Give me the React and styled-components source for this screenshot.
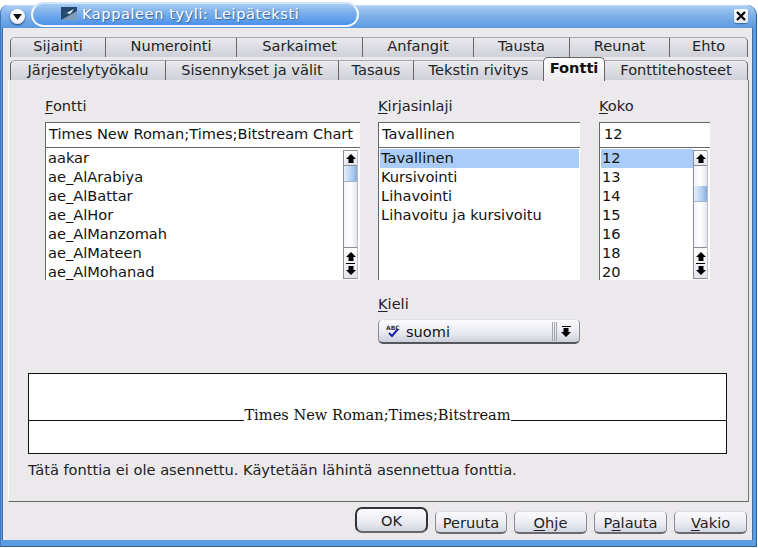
import React from "react";
import styled, { createGlobalStyle } from "styled-components";

const Global = createGlobalStyle`
  html, body { margin: 0; padding: 0; background: #fff; }
  #root { width: 758px; height: 548px; overflow: hidden; }
  * { box-sizing: border-box; }
`;

const Win = styled.div`
  width: 758px; height: 548px; display: flex; flex-direction: column; padding: 5px 1px 1px 0;
  font-family: "DejaVu Sans", sans-serif; font-size: 14.6px; color: #111;
  background: #fff; overflow: hidden;
`;
const Shell = styled.div`
  flex: 1; min-height: 0; display: flex; flex-direction: column; background: #5d9ce2;
  border-radius: 8px 10px 0 0; border-left: 1px solid #3f78bd; border-right: 1px solid #2f6096;
  border-bottom: 1px solid #2f6096;
`;
const TitleBar = styled.div`
  height: 23px; flex: none; display: flex; align-items: flex-start; padding: 0 8px;
  background: linear-gradient(#c4dcf6 0, #a4caf1 2px, #7fb2ea 10px, #5b9ae0 23px);
  border-radius: 8px 10px 0 0;
`;
const MenuBtn = styled.div`
  width: 15px; height: 15px; border-radius: 50%; flex: none; margin: 4px 0 0 1px;
  background: radial-gradient(circle at 50% 35%, #fff 40%, #d6d6dc);
  display: flex; align-items: center; justify-content: center; box-shadow: 0 1px 2px #1c3f6c;
`;
const Pill = styled.div`
  width: 328px; height: 25px; margin: -3px 0 0 6px; flex: none; border-radius: 13px;
  border: 2px solid #f2f8fe; border-top-color: #d4e5f8;
  background: linear-gradient(#a6cbf2, #7db1ec 40%, #4b91e8);
  display: flex; align-items: center; padding: 0 0 2px 28px; gap: 5px;
`;
const TitleText = styled.span`
  color: #fff; font-size: 14.6px; letter-spacing: .55px; text-shadow: 1px 1px 1px #34659e; white-space: nowrap;
`;
const CloseBtn = styled.div`
  margin: 4px 0 0 auto; width: 14px; height: 14px; flex: none; border-radius: 2px;
  background: linear-gradient(#fff, #e4e4ea); display: flex; align-items: center; justify-content: center;
  box-shadow: 0 1px 1px #3a6ca8;
`;
const Frame = styled.div`
  flex: 1; margin: 0 3px 6px 1px; background: #ece9ec; border-left: 1px solid #3f6ea8;
  border-right: 1px solid #3f6ea8; padding: 9px 5px 0 5px; display: flex; flex-direction: column;
`;
const TabRow = styled.div`
  display: flex; height: ${p => p.$h}px; flex: none; margin: ${p => p.$m};
`;
const Tab = styled.div`
  width: ${p => p.$w}px; flex: none; display: flex; align-items: center; justify-content: center;
  font-size: 14.6px; white-space: nowrap; color: #222; padding-bottom: ${p => p.$pb ?? 4}px;
  background: linear-gradient(#e9e9ef, #cfd0d8);
  border-top: 1px solid #a8a8b0; border-left: 1px solid #666;
  &:first-child { border-top-left-radius: 5px; }
  &:last-child { border-top-right-radius: 5px; border-right: 1px solid #666; }
`;
const ActiveTab = styled(Tab)`
  font-weight: 700; color: #111; border: 1px solid #666; border-bottom: none; border-radius: 5px 5px 0 0;
  background: linear-gradient(#fff, #ece9ec); height: 24px; margin-top: -3px; padding-bottom: 4px;
  & + div { border-left: none; }
  &:first-child, &:last-child { border-radius: 5px 5px 0 0; }
`;
const Panel = styled.div`
  width: 741px; height: 422px; flex: none; margin-left: 0; border: 1px solid #c6c6cc; border-left-color: #fff;
  border-right-color: #777; border-top: none; border-bottom: 1px solid #666;
  padding: 16px 20px 0 36px;
`;
const Columns = styled.div`
  display: grid; grid-template-columns: 315px 202px 112px; column-gap: 18px;
`;
const Column = styled.div`
  display: flex; flex-direction: column; min-width: 0;
  &:nth-child(3) { margin-left: 1px; }
`;
const Label = styled.div`
  height: 20px; font-size: 14.6px; line-height: 20px; color: #222;
  u { text-underline-offset: 2px; text-decoration-thickness: 1px; }
`;
const Field = styled.div`
  height: 25px; margin-top: 6px; background: #fff; border-left: 1px solid #666; border-top: 1px solid #666;
  padding-left: ${p => p.$pad ?? 3}px; line-height: 22px; font-size: 14.6px; white-space: nowrap;
`;
const List = styled.div`
  height: 133px; background: #fff; border-left: 1px solid #666; border-top: 1px solid #666;
  display: flex; overflow: hidden; padding: 1px 1px 0 1px;
`;
const Rows = styled.div` flex: 1; min-width: 0; `;
const Row = styled.div`
  height: 19px; line-height: 18px; padding-left: 1px; font-size: 14.6px; white-space: nowrap; color: #111;
  background: ${p => (p.$sel ? "#a9cdf8" : "transparent")};
`;
const Scroll = styled.div`
  width: 15px; flex: none; margin: 1px 1px 1px 0; display: flex; flex-direction: column;
  border-left: 1px solid #8d8d96; border-right: 1px solid #bcbcc4;
  background: linear-gradient(90deg, #f4f4fa, #fff 50%, #e4e4ee);
`;
const ScrollBtn = styled.div`
  height: 16px; flex: none; background: linear-gradient(#fff, #e4e4ec);
  border-top: 1px solid #8d8d96; border-bottom: 1px solid #8d8d96;
  display: flex; align-items: center; justify-content: center;
`;
const Track = styled.div` flex: 1; padding-top: ${p => p.$top}px; `;
const Thumb = styled.div`
  height: 16px; background: linear-gradient(90deg, #e4effb, #a9c9ee 70%, #86a9d6);
  border-bottom: 1px solid #9db4d0;
`;
const ScrollBtn2 = styled(ScrollBtn)` height: 32px; flex-direction: column; gap: 2px; `;
const Bar = styled.div` width: 9px; height: 1px; background: #000; flex: none; `;
const Sub = styled.div` width: 202px; margin-top: 14px; `;
const Combo = styled.div`
  height: 25px; margin-top: 5px; display: flex; align-items: center; padding-left: 7px;
  border-radius: 5px; border: 1px solid #8a8a92; border-top-color: #e0e0e6; border-bottom: 2px solid #55555c;
  background: linear-gradient(#fcfcff, #e8e9f0 60%, #cdd0da); font-size: 14.6px;
  & > svg { margin-right: 5px; }
`;
const Grip = styled.div`
  margin-left: auto; width: 6px; height: 19px; flex: none;
  background: repeating-linear-gradient(90deg, #a4a4ac 0 1px, transparent 1px 2px);
`;
const ComboArrow = styled.div`
  width: 16px; margin-right: 5px; flex: none; display: flex; flex-direction: column; gap: 1px; align-items: center; justify-content: center;
`;
const Preview = styled.div`
  width: 699px; height: 81px; margin: 29px 0 0 -17px; background: #fff; border: 1px solid #111;
  display: flex; align-items: flex-end; padding-bottom: 32px;
  font-family: "DejaVu Serif", serif; font-size: 14.6px; color: #111;
`;
const PreviewLine = styled.div` flex: 1; border-bottom: 1px solid #111; `;
const PreviewText = styled.span` line-height: 14px; margin-bottom: -1px; white-space: nowrap; `;
const Note = styled.div` margin: 7px 0 0 -17px; font-size: 14.6px; line-height: 18px; color: #222; `;
const Footer = styled.div`
  display: flex; justify-content: flex-end; gap: 7px; padding: 9px 0 0 0; align-items: flex-start;
`;
const Button = styled.div`
  height: 23px; width: ${p => p.$w}px; display: flex; align-items: center; justify-content: center;
  font-size: 14.6px; color: #222; border-radius: 5px; border: 1px solid #8a8a92; border-top-color: #dcdce2;
  border-bottom: 2px solid #6a6a72; background: linear-gradient(#fbfbff, #e9eaf1 60%, #d2d5df);
  u { text-underline-offset: 2px; text-decoration-thickness: 1px; }
`;
const DefaultButton = styled(Button)`
  height: 26px; border: 2px solid #333; border-bottom-color: #666; border-radius: 7px; margin-top: -4px;
`;

const Up = () => <svg width="10" height="9" viewBox="0 0 10 9"><path d="M5 0 10 5H7.5V9H2.5V5H0Z" fill="#000" /></svg>;
const Down = () => <svg width="10" height="9" viewBox="0 0 10 9"><path d="M5 9 10 4H7.5V0H2.5V4H0Z" fill="#000" /></svg>;

const ScrollBar = ({ top }) => (
  <Scroll>
    <ScrollBtn><Up /></ScrollBtn>
    <Track $top={top}><Thumb /></Track>
    <ScrollBtn2>
      <Up />
      <Bar />
      <Down />
    </ScrollBtn2>
  </Scroll>
);

const fonts = ["aakar", "ae_AlArabiya", "ae_AlBattar", "ae_AlHor", "ae_AlManzomah", "ae_AlMateen", "ae_AlMohanad"];
const styles = ["Tavallinen", "Kursivointi", "Lihavointi", "Lihavoitu ja kursivoitu"];
const sizes = ["12", "13", "14", "15", "16", "18", "20"];
const row1 = [["Sijainti", 95], ["Numerointi", 131], ["Sarkaimet", 126], ["Anfangit", 111], ["Tausta", 96], ["Reunat", 100], ["Ehto", 79]];

export default function App() {
  return (
    <Win>
      <Global />
      <Shell>
        <TitleBar>
          <MenuBtn><svg width="9" height="6" viewBox="0 0 9 6"><path d="M0 0H9L4.5 6Z" fill="#111" /></svg></MenuBtn>
          <Pill>
            <svg width="16" height="13" viewBox="0 0 16 13">
              <rect width="16" height="13" fill="#234a6e" />
              <path d="M0 13 16 4V13Z" fill="#7f9cb6" />
              <path d="M2 8 13 2 9 7 6 6Z" fill="#fff" />
            </svg>
            <TitleText>Kappaleen tyyli: Leipäteksti</TitleText>
          </Pill>
          <CloseBtn>
            <svg width="10" height="10" viewBox="0 0 10 10"><path d="M1 1 9 9M9 1 1 9" stroke="#000" strokeWidth="2.2" /></svg>
          </CloseBtn>
        </TitleBar>
        <Frame>
          <TabRow $h={20} $m="0 0 3px 2px">
            {row1.map(([t, w]) => <Tab key={t} $w={w}>{t}</Tab>)}
          </TabRow>
          <TabRow $h={20} $m="0 0 0 2px">
            <Tab $pb={3} $w={155}>Järjestelytyökalu</Tab>
            <Tab $pb={3} $w={173}>Sisennykset ja välit</Tab>
            <Tab $pb={3} $w={75}>Tasaus</Tab>
            <Tab $pb={3} $w={130}>Tekstin rivitys</Tab>
            <ActiveTab $w={62}>Fontti</ActiveTab>
            <Tab $pb={3} $w={143}>Fonttitehosteet</Tab>
          </TabRow>
          <Panel>
            <Columns>
              <Column>
                <Label><u>F</u>ontti</Label>
                <Field>Times New Roman;Times;Bitstream Chart</Field>
                <List>
                  <Rows>{fonts.map(f => <Row key={f}>{f}</Row>)}</Rows>
                  <ScrollBar top={0} />
                </List>
              </Column>
              <Column>
                <Label><u>K</u>irjasinlaji</Label>
                <Field>Tavallinen</Field>
                <List>
                  <Rows>{styles.map((s, i) => <Row key={s} $sel={i === 0}>{s}</Row>)}</Rows>
                </List>
                <Sub>
                  <Label><u>K</u>ieli</Label>
                  <Combo>
                    <svg width="15" height="14" viewBox="0 0 15 14">
                      <text x="0" y="6" fontSize="6" fontFamily="DejaVu Sans" fontWeight="700" fill="#333">ABC</text>
                      <path d="M3 9 6 12 12 5" stroke="#1b1bb0" strokeWidth="2" fill="none" />
                    </svg>
                    suomi
                    <Grip />
                    <ComboArrow><Bar /><Down /></ComboArrow>
                  </Combo>
                </Sub>
              </Column>
              <Column>
                <Label><u>K</u>oko</Label>
                <Field $pad={4}>12</Field>
                <List>
                  <Rows>{sizes.map((s, i) => <Row key={s} $sel={i === 0}>{s}</Row>)}</Rows>
                  <ScrollBar top={20} />
                </List>
              </Column>
            </Columns>
            <Preview>
              <PreviewLine />
              <PreviewText>Times New Roman;Times;Bitstream</PreviewText>
              <PreviewLine />
            </Preview>
            <Note>Tätä fonttia ei ole asennettu. Käytetään lähintä asennettua fonttia.</Note>
          </Panel>
          <Footer>
            <DefaultButton $w={73}>OK</DefaultButton>
            <Button $w={72}>Peruuta</Button>
            <Button $w={73}><span><u>O</u>hje</span></Button>
            <Button $w={73}><span>P<u>a</u>lauta</span></Button>
            <Button $w={73}><span><u>V</u>akio</span></Button>
          </Footer>
        </Frame>
      </Shell>
    </Win>
  );
}
